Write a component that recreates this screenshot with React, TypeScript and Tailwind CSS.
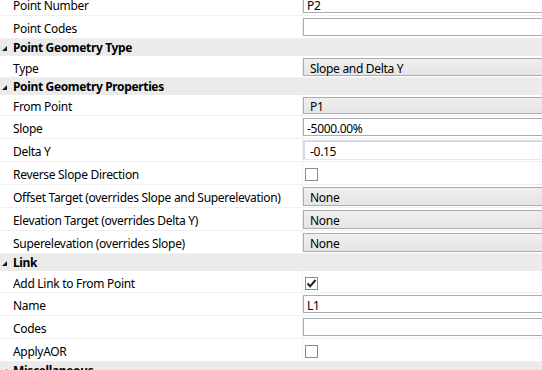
import React from 'react';

type Kind = 'text' | 'combo' | 'check' | 'focus';

function Triangle() {
  return (
    <svg width="5" height="5" viewBox="0 0 5 5" className="mr-[6px] ml-[2px]">
      <polygon points="5,0 5,5 0,5" fill="#1e1e1e" />
    </svg>
  );
}

function Category({ title, h }: { title: string; h: string }) {
  return (
    <div className={`flex items-center bg-[#ebebeb] pt-[1px] ${h}`}>
      <Triangle />
      <span className="font-bold text-black tracking-[-0.35px]">{title}</span>
    </div>
  );
}

function Value({ kind, value }: { kind: Kind; value?: string | boolean }) {
  if (kind === 'check') {
    return (
      <div className="flex items-center h-full pl-[2px] pt-[3px]">
        <div className="w-[13px] h-[13px] border border-[#8a8a8a] bg-white flex items-center justify-center">
          {value === true && (
            <svg width="11" height="11" viewBox="0 0 11 11">
              <path d="M1.5 5.5 L4.2 8.3 L9.5 2" stroke="#222" strokeWidth="2" fill="none" />
            </svg>
          )}
        </div>
      </div>
    );
  }
  if (kind === 'combo') {
    return (
      <div className="h-full pt-[2px] pb-[1px]">
        <div className="h-full border border-[#acacac] bg-gradient-to-b from-[#efefef] to-[#e5e5e5] flex items-center pl-[6px] pt-[3px]">
          {value}
        </div>
      </div>
    );
  }
  if (kind === 'focus') {
    return (
      <div className="h-full pt-[1px] pb-[1px]">
        <div className="h-full border-t-2 border-l-2 border-[#d6dce6] border-r border-b border-r-[#e3e9ef] border-b-[#e3e9ef] bg-white flex items-center pl-[5px] pt-[3px]">
          {value}
        </div>
      </div>
    );
  }
  return (
    <div className="h-full pt-[2px] pb-[2px]">
      <div className="h-full border border-[#abadb3] bg-white flex items-center pl-[3px] pt-[3px]">{value}</div>
    </div>
  );
}

function Row({ label, kind, value, h }: { label: string; kind: Kind; value?: string | boolean; h: string }) {
  return (
    <div className={`flex border-b border-[#f0f0f0] bg-white ${h}`}>
      <div className="w-[303px] shrink-0 pl-[13px] pt-[4px] flex items-center border-r border-[#f0f0f0] text-black">
        {label}
      </div>
      <div className="flex-1">
        <Value kind={kind} value={value} />
      </div>
    </div>
  );
}

export default function App() {
  return (
    <div
      className="w-[542px] h-[370px] overflow-hidden bg-white text-[12px] leading-none tracking-[-0.3px]"
      style={{ fontFamily: '"Noto Sans", "Open Sans", sans-serif' }}
    >
      <div className="w-[570px] -mt-[7px]">
        <Row label="Point Number" kind="text" value="P2" h="h-[23px]" />
        <Row label="Point Codes" kind="text" value="" h="h-[23px]" />
        <Category title="Point Geometry Type" h="h-[17px]" />
        <Row label="Type" kind="combo" value="Slope and Delta Y" h="h-[22px]" />
        <Category title="Point Geometry Properties" h="h-[17px]" />
        <Row label="From Point" kind="combo" value="P1" h="h-[21px]" />
        <Row label="Slope" kind="text" value="-5000.00%" h="h-[23px]" />
        <Row label="Delta Y" kind="focus" value="-0.15" h="h-[23px]" />
        <Row label="Reverse Slope Direction" kind="check" value={false} h="h-[23px]" />
        <Row label="Offset Target (overrides Slope and Superelevation)" kind="combo" value="None" h="h-[23px]" />
        <Row label="Elevation Target (overrides Delta Y)" kind="combo" value="None" h="h-[23px]" />
        <Row label="Superelevation (overrides Slope)" kind="combo" value="None" h="h-[23px]" />
        <Category title="Link" h="h-[17px]" />
        <Row label="Add Link to From Point" kind="check" value={true} h="h-[22px]" />
        <Row label="Name" kind="text" value="L1" h="h-[23px]" />
        <Row label="Codes" kind="text" value="" h="h-[23px]" />
        <Row label="ApplyAOR" kind="check" value={false} h="h-[23px]" />
        <Category title="Miscellaneous" h="h-[17px]" />
      </div>
    </div>
  );
}
